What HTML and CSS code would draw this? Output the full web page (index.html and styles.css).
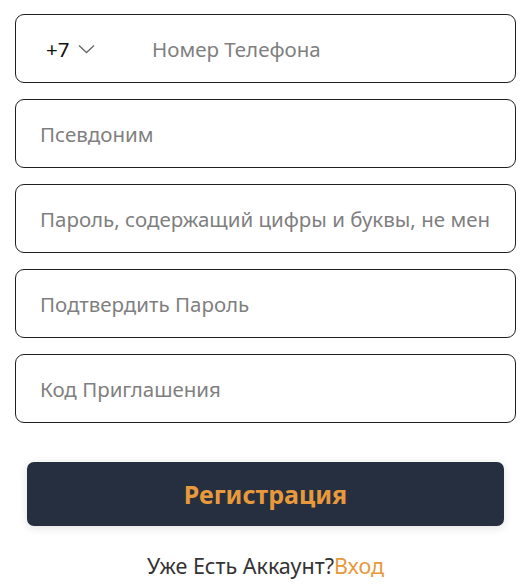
FILE: index.html
```html
<!DOCTYPE html>
<html lang="ru">
<head>
<meta charset="utf-8">
<link rel="stylesheet" href="styles.css">
</head>
<body>
<div class="form">
  <div class="field phone">
    <div class="code">+7 <svg class="chev" width="17" height="10" viewBox="0 0 17 10"><path d="M1 1.5 L8.5 8.5 L16 1.5" fill="none" stroke="#666" stroke-width="1.3"/></svg></div>
    <span class="ph">Номер Телефона</span>
  </div>
  <div class="field"><span class="ph">Псевдоним</span></div>
  <div class="field"><span class="ph">Пароль, содержащий цифры и буквы, не мен</span></div>
  <div class="field"><span class="ph">Подтвердить Пароль</span></div>
  <div class="field"><span class="ph">Код Приглашения</span></div>
  <button class="submit">Регистрация</button>
  <p class="login">Уже Есть Аккаунт?<a class="link">Вход</a></p>
</div>
</body>
</html>
```
FILE: styles.css
```css
html, body { margin: 0; padding: 0; background: #fff; }
body { font-family: "Noto Sans", "Open Sans", sans-serif; }
.form {
  padding: 14px 15px 0 15px;
  display: flex;
  flex-direction: column;
  gap: 16px;
}
.field {
  box-sizing: border-box;
  height: 69px;
  border: 1px solid #1f1f1f;
  border-radius: 9px;
  display: flex;
  align-items: center;
  padding: 0 14px 0 24px;
  overflow: hidden;
}
.ph {
  font-size: 20.5px;
  color: #7f7f7f;
  white-space: nowrap;
}
.code {
  width: 106px;
  padding-left: 6px;
  font-size: 20.5px;
  color: #111;
  display: flex;
  align-items: center;
  gap: 9px;
  flex-shrink: 0;
}
.chev { margin-top: 1px; }
.submit {
  margin: 23px 12px 0 12px;
  height: 64px;
  border: none;
  border-radius: 7px;
  background: #252f3f;
  color: #e8993b;
  font-family: "Noto Sans", sans-serif;
  font-weight: bold;
  font-size: 25px;
  box-shadow: 0 2px 10px rgba(0,0,0,0.12);
}
.login {
  margin: 9px 0 0 0;
  text-align: center;
  font-size: 21.5px;
  color: #333;
}
.link { color: #e8993b; }
```
